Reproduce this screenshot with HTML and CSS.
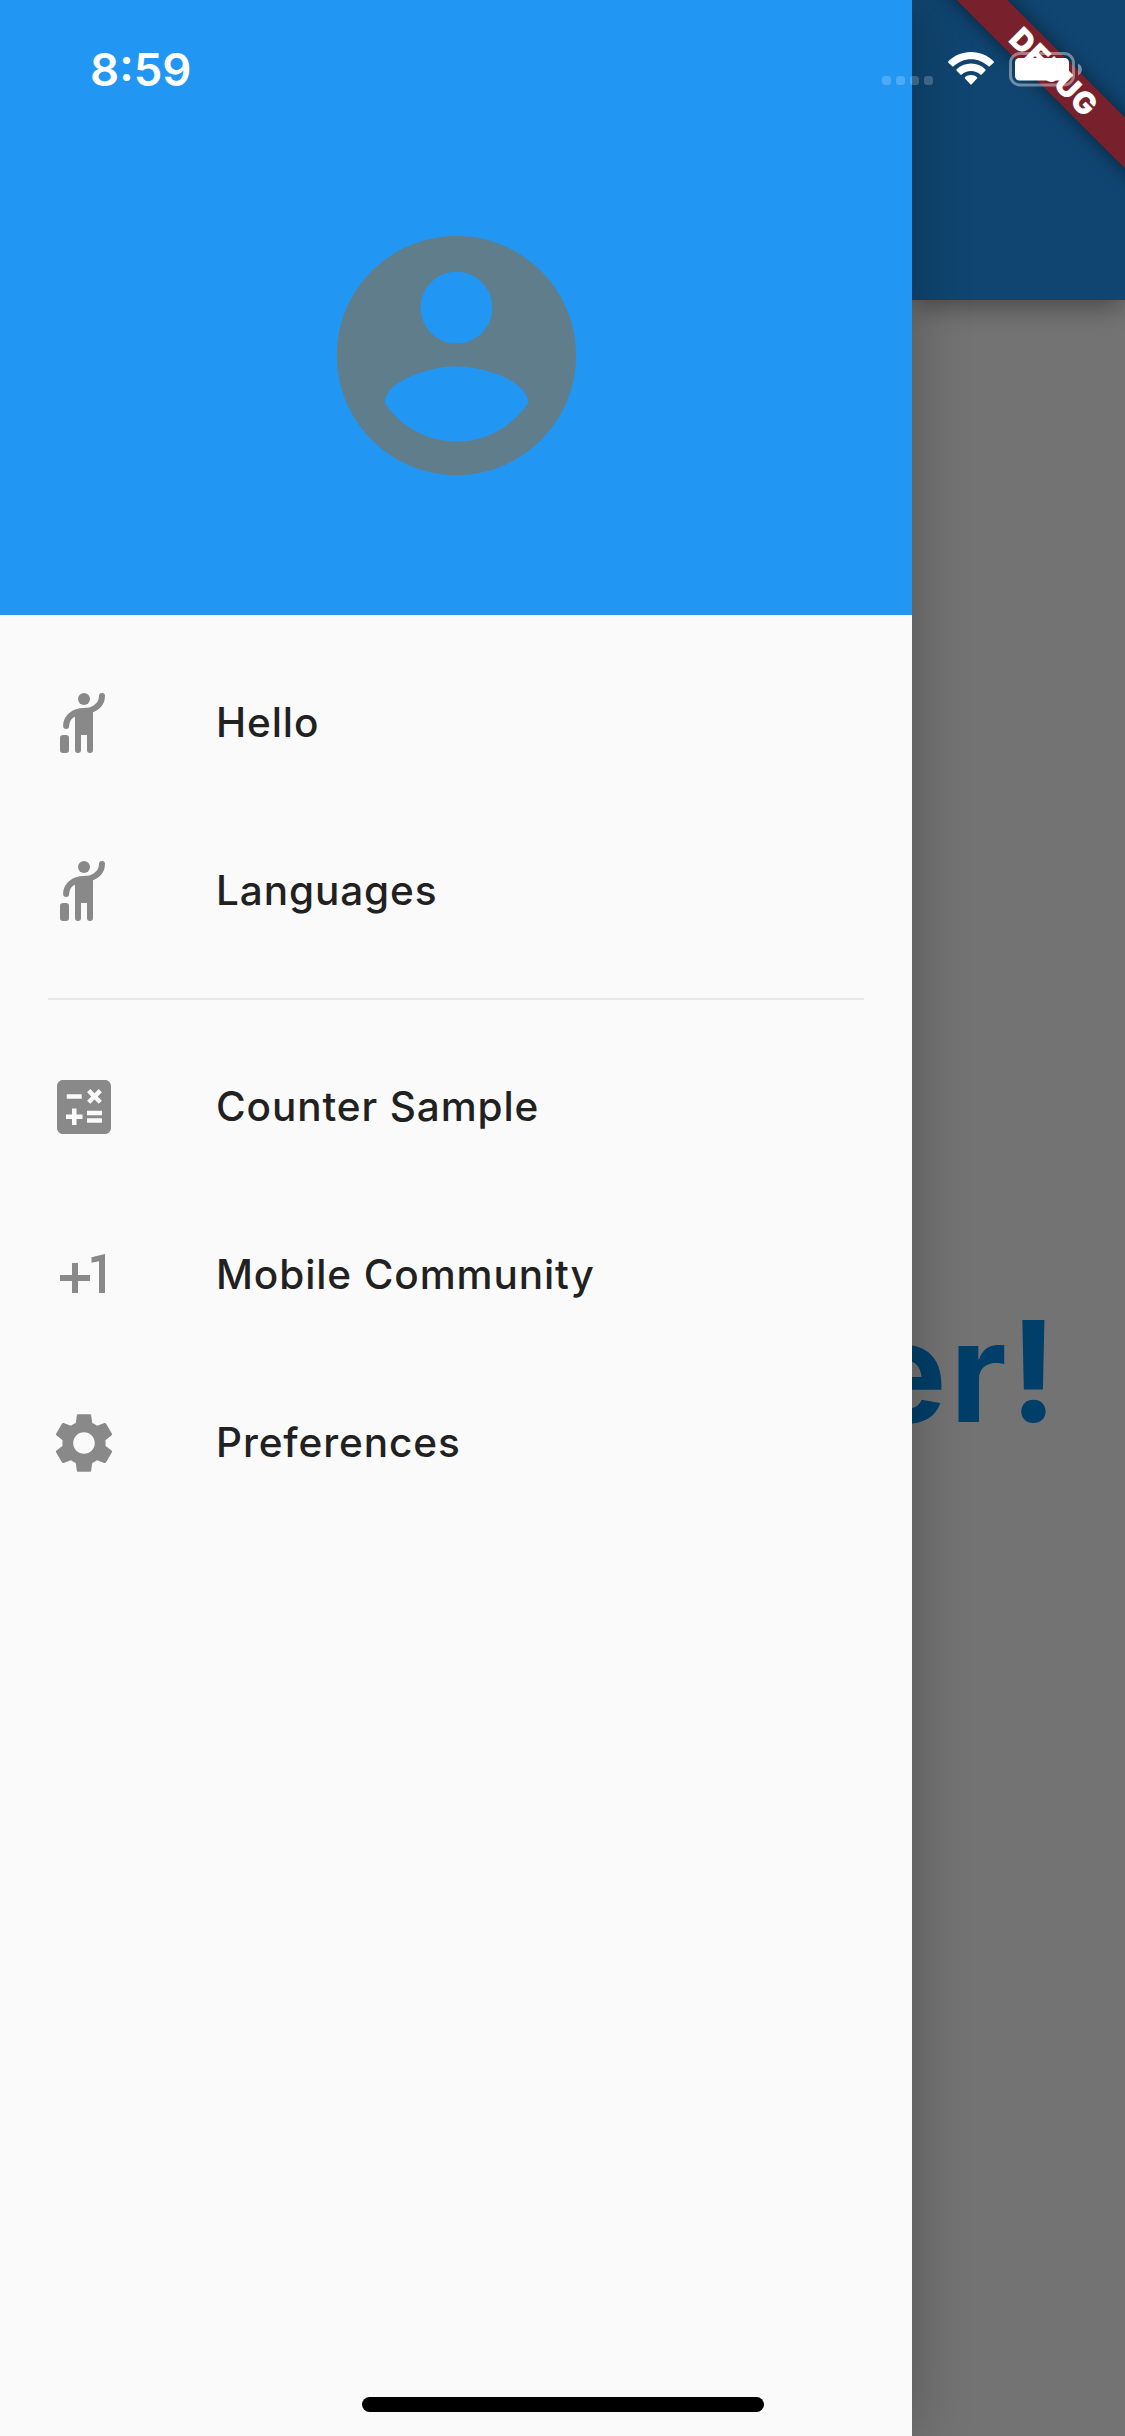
FILE: index.html
```
<!DOCTYPE html>
<html lang="en">
<head>
<meta charset="utf-8">
<title>Navigation drawer</title>
<link rel="stylesheet" href="styles.css">
</head>
<body>
<svg class="defs" aria-hidden="true">
  <symbol id="hail" viewBox="0 0 24 24"><circle cx="12" cy="4" r="2"/><rect x="4" y="16" width="3" height="6" rx="1"/><path d="M17 3a1 1 0 0 1 2 0C18.9 5.2 18.1 6.4 16.7 7.5c-.5.4-1.1.7-1.7.9V21a1 1 0 0 1-2 0v-5h-2v5a1 1 0 0 1-2 0V9.9c-.6.2-1.75.9-1.96 3.1a1 1 0 0 1-2 0C5.1 11 5.9 9.6 7.3 8.5 8.5 7.5 10 7 12 7s2.68-.46 3.48-1.06C16.1 5.4 16.9 4.9 17 3z"/></symbol>
</svg>
<main class="screen">
  <aside class="drawer">
    <header class="drawer-header">
      <svg class="avatar" viewBox="0 0 24 24"><path d="M12 2C6.48 2 2 6.48 2 12s4.48 10 10 10 10-4.48 10-10S17.52 2 12 2zm0 3c1.66 0 3 1.34 3 3s-1.34 3-3 3-3-1.34-3-3 1.34-3 3-3zm0 14.2c-2.5 0-4.71-1.28-6-3.22.03-1.99 4-3.08 6-3.08 1.99 0 5.97 1.09 6 3.08-1.29 1.94-3.5 3.22-6 3.22z"/></svg>
    </header>
    <nav class="menu">
      <a class="item"><svg class="icon"><use href="#hail"/></svg><span>Hello</span></a>
      <a class="item"><svg class="icon"><use href="#hail"/></svg><span>Languages</span></a>
      <hr class="divider">
      <a class="item"><svg class="icon" viewBox="0 0 24 24"><path d="M19 3H5c-1.1 0-2 .9-2 2v14c0 1.1.9 2 2 2h14c1.1 0 2-.9 2-2V5c0-1.1-.9-2-2-2zm-5.97 4.06L14.09 6l1.41 1.41L16.91 6l1.06 1.06-1.41 1.41 1.41 1.41-1.06 1.06-1.41-1.4-1.41 1.41-1.06-1.06 1.41-1.41-1.41-1.42zm-6.78.66h5v1.5h-5v-1.5zM11.5 16h-2v2H8v-2H6v-1.5h2v-2h1.5v2h2V16zm6.5 1.25h-5v-1.5h5v1.5zm0-2.5h-5v-1.5h5v1.5z"/></svg><span>Counter Sample</span></a>
      <a class="item"><svg class="icon" viewBox="0 0 24 24"><path d="M10 8H8v4H4v2h4v4h2v-4h4v-2h-4zm4.5-1.92V7.9l2.5-.5V18h2V5z"/></svg><span>Mobile Community</span></a>
      <a class="item"><svg class="icon" viewBox="0 0 24 24"><path d="M19.14 12.94c.04-.3.06-.61.06-.94 0-.32-.02-.64-.07-.94l2.03-1.58c.18-.14.23-.41.12-.61l-1.92-3.32c-.12-.22-.37-.29-.59-.22l-2.39.96c-.5-.38-1.03-.7-1.62-.94l-.36-2.54c-.04-.24-.24-.41-.48-.41h-3.84c-.24 0-.43.17-.47.41l-.36 2.54c-.59.24-1.13.57-1.62.94l-2.39-.96c-.22-.08-.47 0-.59.22L2.74 8.87c-.12.21-.08.47.12.61l2.03 1.58c-.05.3-.09.63-.09.94s.02.64.07.94l-2.03 1.58c-.18.14-.23.41-.12.61l1.92 3.32c.12.22.37.29.59.22l2.39-.96c.5.38 1.03.7 1.62.94l.36 2.54c.05.24.24.41.48.41h3.84c.24 0 .44-.17.47-.41l.36-2.54c.59-.24 1.13-.56 1.62-.94l2.39.96c.22.08.47 0 .59-.22l1.92-3.32c.12-.22.07-.47-.12-.61l-2.01-1.58zM12 15.6c-1.98 0-3.6-1.62-3.6-3.6s1.62-3.6 3.6-3.6 3.6 1.62 3.6 3.6-1.62 3.6-3.6 3.6z"/></svg><span>Preferences</span></a>
    </nav>
  </aside>
  <section class="page">
    <div class="app-bar"></div>
    <div class="page-body"><h1 class="greeting">er!</h1></div>
  </section>
  <div class="banner-clip"><div class="banner"><span>DEBUG</span></div></div>
  <div class="status-bar">
    <span class="time">8:59</span>
    <div class="indicators">
      <div class="signal"><i></i><i></i><i></i><i></i></div>
      <svg class="wifi" viewBox="0 0 46 34"><path d="M23 0c9 0 17 3.600 22.600 9.200.5.5.5 1 0 1.500L41.800 14.300c-.4.4-.9.4-1.300 0C35.800 9.900 29.700 7.200 23 7.200S10.200 9.900 5.500 14.300c-.4.4-.9.4-1.300 0L.4 10.700c-.5-.5-.5-1 0-1.500C6 3.600 14 0 23 0z"/><path d="M23 11.600c5.600 0 10.700 2.100 14.300 5.700.5.5.5 1 0 1.500l-3.600 3.600c-.5.5-.9.4-1.400 0-2.500-2.200-5.700-3.500-9.300-3.500s-6.800 1.300-9.300 3.500c-.5.4-.9.5-1.400 0l-3.600-3.600c-.5-.5-.5-1 0-1.500 3.600-3.600 8.700-5.700 14.300-5.700z"/><path d="M23 23c2.400 0 4.500.8 6 2.200.5.5.5.900 0 1.400l-5.300 5.700c-.5.6-.9.6-1.400 0L17 26.600c-.5-.5-.5-.9 0-1.400 1.500-1.400 3.600-2.200 6-2.200z"/></svg>
      <svg class="battery" viewBox="0 0 74 35"><rect class="shell" x="1.500" y="1.500" width="63" height="31.500" rx="9.500"/><rect x="6" y="6" width="54" height="22.500" rx="4.500"/><path class="nub" d="M69 11.500c5.200 2.500 5.200 9.500 0 12z"/></svg>
    </div>
  </div>
  <div class="home-indicator"></div>
</main>
</body>
</html>
```

FILE: styles.css
```
body {
  margin: 0;
  font-family: Inter, "Liberation Sans", sans-serif;
}

.defs {
  position: absolute;
  width: 0;
  height: 0;
}

.screen {
  position: relative;
  display: flex;
  width: 1125px;
  height: 2436px;
  overflow: hidden;
  background: #737373;
}

.drawer {
  position: relative;
  z-index: 1;
  flex: none;
  width: 912px;
  background: #fafafa;
  box-shadow: 0 0 54px rgba(0, 0, 0, .26);
}

.drawer-header {
  display: flex;
  justify-content: center;
  align-items: flex-start;
  box-sizing: border-box;
  height: 615px;
  padding-top: 212px;
  background: #2196f3;
}

.avatar {
  width: 287px;
  height: 287px;
  fill: #607d8b;
}

.menu {
  padding-top: 24px;
}

.item {
  display: flex;
  align-items: center;
  gap: 96px;
  height: 168px;
  padding-left: 48px;
  color: #212121;
  font-size: 40.5px;
  font-weight: 450;
  letter-spacing: .9px;
  white-space: nowrap;
}

.item span {
  padding-bottom: 1px;
}

.icon {
  width: 72px;
  height: 72px;
  fill: #898989;
}

.divider {
  height: 2px;
  margin: 23px 48px;
  border: 0;
  background: #e8e8e8;
}

.page {
  flex: 1;
  min-width: 0;
}

.app-bar {
  height: 300px;
  background: #0f4570;
  box-shadow: 0 10px 24px -3px rgba(0, 0, 0, .36);
}

.page-body {
  display: flex;
  justify-content: flex-end;
  align-items: center;
  box-sizing: border-box;
  height: 2136px;
  padding: 5px 65px 0 0;
}

.greeting {
  margin: 0;
  color: #003f69;
  font-size: 140px;
  font-weight: 700;
  letter-spacing: 3px;
  line-height: 170px;
}

.banner-clip {
  position: absolute;
  z-index: 2;
  top: 0;
  right: 0;
  width: 213px;
  height: 213px;
  overflow: hidden;
}

.banner {
  position: absolute;
  top: 54px;
  left: -8.5px;
  width: 300px;
  height: 36px;
  transform: rotate(45deg);
  background: #78212c;
  box-shadow: 0 0 18px rgba(0, 0, 0, .5);
  color: #fff;
  font-size: 30.5px;
  font-weight: 900;
  letter-spacing: .8px;
  line-height: 35px;
  text-align: center;
}

.status-bar {
  position: absolute;
  z-index: 3;
  inset: 0 0 auto;
  display: flex;
  justify-content: space-between;
  height: 132px;
  color: #fff;
}

.time {
  padding: 43px 0 0 90px;
  font-size: 45.5px;
  font-weight: 600;
  line-height: 54px;
}

.indicators {
  display: flex;
  align-items: flex-start;
  gap: 15px;
  padding: 52px 42px 0 0;
  fill: #fff;
}

.signal {
  display: flex;
  gap: 5px;
  padding-top: 24px;
}

.signal i {
  width: 9px;
  height: 9px;
  border-radius: 3px;
  background: rgba(255, 255, 255, .2);
}

.wifi {
  width: 46px;
  height: 34px;
}

.battery {
  width: 74px;
  height: 35px;
}

.shell {
  fill: none;
  stroke: #fff;
  stroke-width: 3;
  opacity: .4;
}

.nub {
  opacity: .45;
}

.home-indicator {
  position: absolute;
  z-index: 3;
  bottom: 24px;
  left: 362px;
  width: 402px;
  height: 15px;
  border-radius: 8px;
  background: #000;
}
```
